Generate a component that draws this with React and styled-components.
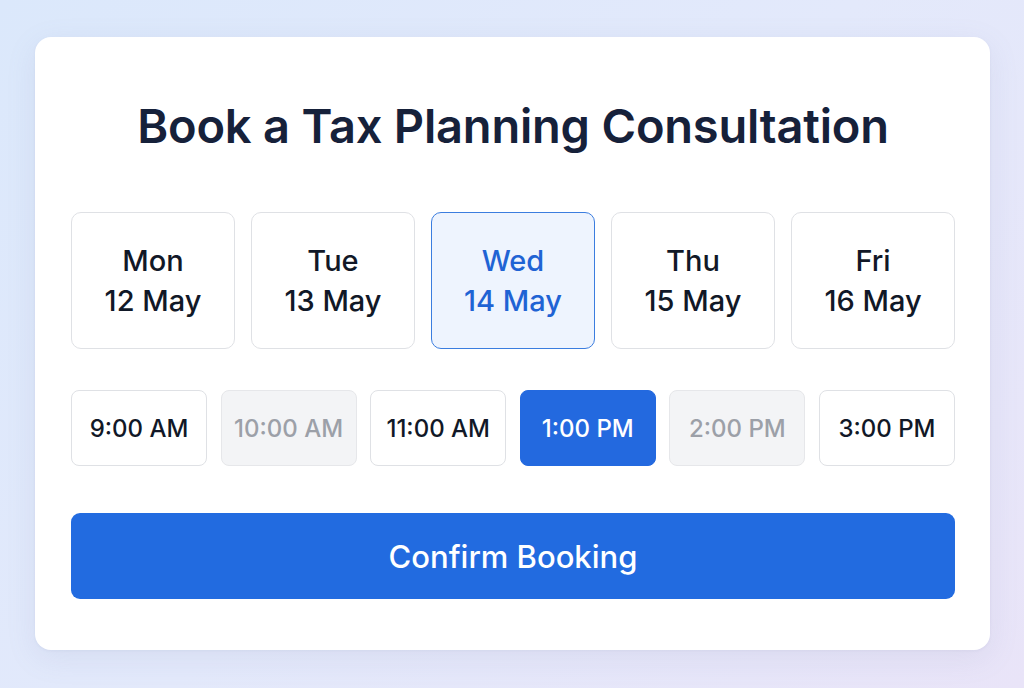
import React, { useState } from "react";
import styled, { createGlobalStyle } from "styled-components";

const Global = createGlobalStyle`
  html, body { margin: 0; padding: 0; }
  body {
    font-family: Inter, "Noto Sans", "Liberation Sans", sans-serif;
    background: linear-gradient(135deg, #dbe8fb 0%, #e3e9fb 50%, #e9e4f8 100%);
    min-height: 688px;
  }
  * { box-sizing: border-box; }
`;

const Page = styled.div`
  width: 1024px;
  height: 688px;
  padding: 37px 34px 38px 35px;
`;

const Card = styled.div`
  background: #ffffff;
  border-radius: 16px;
  box-shadow: 0 8px 30px rgba(120, 130, 170, 0.12), 0 1px 3px rgba(120, 130, 170, 0.08);
  height: 613px;
  padding: 62px 35px 0 36px;
  display: flex;
  flex-direction: column;
`;

const Title = styled.h1`
  margin: 0;
  text-align: center;
  font-size: 47px;
  line-height: 53px;
  font-weight: 600;
  color: #16213a;
  letter-spacing: -0.2px;
`;

const DateRow = styled.div`
  margin-top: 60px;
  display: grid;
  grid-template-columns: repeat(5, 1fr);
  gap: 16px;
`;

const DateCard = styled.button`
  height: 137px;
  border-radius: 10px;
  border: 1.5px solid ${(p) => (p.$selected ? "#3b7ddf" : "#dfe1e5")};
  background: ${(p) => (p.$selected ? "#eef4fe" : "#ffffff")};
  color: ${(p) => (p.$selected ? "#1f63d4" : "#111827")};
  font-family: inherit;
  font-size: 29px;
  line-height: 40px;
  font-weight: 500;
  display: flex;
  flex-direction: column;
  align-items: center;
  justify-content: center;
  padding: 0;
  cursor: pointer;
`;

const TimeRow = styled.div`
  margin-top: 41px;
  display: grid;
  grid-template-columns: repeat(6, 1fr);
  gap: 13.5px;
`;

const TimeSlot = styled.button`
  height: 76px;
  border-radius: 8px;
  font-family: inherit;
  font-size: 24px;
  font-weight: 500;
  padding: 0;
  cursor: ${(p) => (p.$disabled ? "default" : "pointer")};
  border: 1.5px solid
    ${(p) => (p.$selected ? "#2369df" : p.$disabled ? "#e6e7ea" : "#dfe1e5")};
  background: ${(p) =>
    p.$selected ? "#2369df" : p.$disabled ? "#f3f4f6" : "#ffffff"};
  color: ${(p) => (p.$selected ? "#ffffff" : p.$disabled ? "#9ca0a8" : "#111827")};
`;

const Confirm = styled.button`
  margin-top: 47px;
  height: 86px;
  width: 100%;
  border: none;
  border-radius: 9px;
  background: #226be0;
  color: #ffffff;
  font-family: inherit;
  font-size: 31px;
  font-weight: 500;
  cursor: pointer;
`;

const dates = [
  ["Mon", "12 May"],
  ["Tue", "13 May"],
  ["Wed", "14 May"],
  ["Thu", "15 May"],
  ["Fri", "16 May"],
];

const times = [
  { t: "9:00 AM" },
  { t: "10:00 AM", disabled: true },
  { t: "11:00 AM" },
  { t: "1:00 PM" },
  { t: "2:00 PM", disabled: true },
  { t: "3:00 PM" },
];

export default function App() {
  const [day, setDay] = useState(2);
  const [time, setTime] = useState(3);
  return (
    <>
      <Global />
      <Page>
        <Card>
          <Title>Book a Tax Planning Consultation</Title>
          <DateRow>
            {dates.map(([d, n], i) => (
              <DateCard key={d} $selected={i === day} onClick={() => setDay(i)}>
                <span>{d}</span>
                <span>{n}</span>
              </DateCard>
            ))}
          </DateRow>
          <TimeRow>
            {times.map((s, i) => (
              <TimeSlot
                key={s.t}
                $selected={i === time}
                $disabled={s.disabled}
                onClick={() => !s.disabled && setTime(i)}
              >
                {s.t}
              </TimeSlot>
            ))}
          </TimeRow>
          <Confirm>Confirm Booking</Confirm>
        </Card>
      </Page>
    </>
  );
}
